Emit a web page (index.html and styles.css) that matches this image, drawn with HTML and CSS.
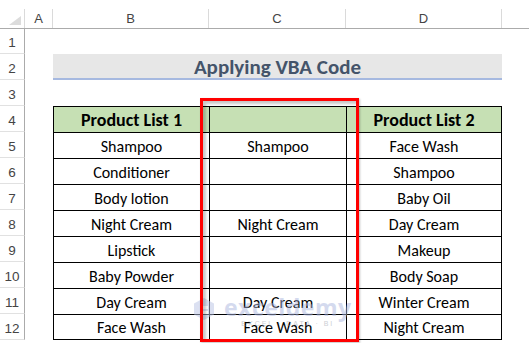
FILE: index.html
```html
<!DOCTYPE html>
<html>
<head>
<meta charset="utf-8">
<link rel="stylesheet" href="styles.css">
</head>
<body>
<div class="sheet">
  <div class="colhead">
    <div class="corner"><span class="tri"></span></div>
    <div class="ch ca">A</div>
    <div class="ch cb">B</div>
    <div class="ch cc">C</div>
    <div class="ch cd">D</div>
    <div class="ch ce"></div>
  </div>
  <div class="row r1"><div class="rn">1</div></div>
  <div class="row"><div class="rn">2</div><div class="ca"></div><div class="title">Applying VBA Code</div></div>
  <div class="row"><div class="rn">3</div></div>
  <div class="row"><div class="rn">4</div><div class="ca"></div><div class="cell cb hd">Product List 1</div><div class="cell cc hd"></div><div class="cell cd hd last">Product List 2</div></div>
  <div class="row"><div class="rn">5</div><div class="ca"></div><div class="cell cb">Shampoo</div><div class="cell cc">Shampoo</div><div class="cell cd last">Face Wash</div></div>
  <div class="row"><div class="rn">6</div><div class="ca"></div><div class="cell cb">Conditioner</div><div class="cell cc"></div><div class="cell cd last">Shampoo</div></div>
  <div class="row"><div class="rn">7</div><div class="ca"></div><div class="cell cb">Body lotion</div><div class="cell cc"></div><div class="cell cd last">Baby Oil</div></div>
  <div class="row"><div class="rn">8</div><div class="ca"></div><div class="cell cb">Night Cream</div><div class="cell cc">Night Cream</div><div class="cell cd last">Day Cream</div></div>
  <div class="row"><div class="rn">9</div><div class="ca"></div><div class="cell cb">Lipstick</div><div class="cell cc"></div><div class="cell cd last">Makeup</div></div>
  <div class="row"><div class="rn">10</div><div class="ca"></div><div class="cell cb">Baby Powder</div><div class="cell cc"></div><div class="cell cd last">Body Soap</div></div>
  <div class="row"><div class="rn">11</div><div class="ca"></div><div class="cell cb">Day Cream</div><div class="cell cc">Day Cream</div><div class="cell cd last">Winter Cream</div></div>
  <div class="row"><div class="rn">12</div><div class="ca"></div><div class="cell cb bottom">Face Wash</div><div class="cell cc bottom">Face Wash</div><div class="cell cd last bottom">Night Cream</div></div>
  <div class="watermark">
    <svg class="wm-icon" width="24" height="24" viewBox="0 0 24 24"><path d="M12 1 L22 6.5 V17.5 L12 23 L2 17.5 V6.5 Z" fill="#b9c3e4"/><path d="M8 9 H16 V12 H11 V14 H16 V17 H8 Z" fill="#ffffff"/></svg>
    <div class="wm-text">
      <div class="wm-name">exceldemy</div>
      <div class="wm-sub">EXCEL · DATA · BI</div>
    </div>
  </div>
  <div class="redbox"></div>
</div>
</body>
</html>
```
FILE: styles.css
```css
* { box-sizing: border-box; }
html, body { margin: 0; padding: 0; background: #ffffff; }
body {
  font-family: "Carlito", "Calibri", "Lato", "Liberation Sans", sans-serif;
  color: #000;
  width: 529px;
  height: 343px;
  overflow: hidden;
}
.sheet { position: relative; width: 529px; }
.colhead {
  display: flex;
  height: 29px;
  padding-top: 9px;
  border-bottom: 1px solid #ababab;
  font-family: "Liberation Sans", "DejaVu Sans", sans-serif;
  font-size: 13px;
  color: #444;
}
.corner { width: 25px; position: relative; border-right: 1px solid #dadada; }
.tri {
  position: absolute; right: 3px; bottom: 3px;
  width: 0; height: 0;
  border-left: 12px solid transparent;
  border-bottom: 9px solid #dcdcdc;
}
.ch {
  display: flex; align-items: center; justify-content: center;
  border-right: 1px solid #dadada;
}
.ca { width: 28px; }
.cb { width: 156px; }
.cc { width: 137px; }
.cd { width: 156px; }
.ce { flex: 1; border-right: none; }
.row { display: flex; height: 26px; position: relative; z-index: 1; }
.row.r1 { height: 25px; }
.rn {
  width: 25px;
  border-right: 1px solid #ababab;
  border-bottom: 1px solid #e1e1e1;
  display: flex; align-items: flex-end; justify-content: center;
  padding-bottom: 3px;
  font-family: "Liberation Sans", "DejaVu Sans", sans-serif;
  font-size: 13.5px;
  color: #444;
}
.title {
  width: 449px;
  background: #e7e7e7;
  border-bottom: 2px solid #a6b9e0;
  display: flex; align-items: center; justify-content: center;
  font-weight: bold;
  font-size: 21px;
  color: #44546a;
  padding-top: 1px;
}
.cell {
  border-left: 1px solid #000;
  border-top: 1px solid #000;
  display: flex; align-items: flex-end; justify-content: center;
  padding-bottom: 2px;
  font-size: 16px;
  white-space: nowrap;
}
.cell.last { border-right: 1px solid #000; }
.cell.bottom { border-bottom: 1px solid #000; }
.cell.hd { background: #c6e0b4; font-weight: bold; font-size: 18px; padding-bottom: 1px; }
.redbox {
  position: absolute;
  z-index: 3;
  left: 200px; top: 98px;
  width: 159px; height: 244px;
  border: 3px solid #ff0000;
  box-shadow: inset 3px 3px 3px rgba(0,0,0,0.22), 1px 1px 2px rgba(0,0,0,0.25);
}
.watermark {
  position: absolute;
  z-index: 2;
  left: 192px; top: 296px;
  display: flex; align-items: flex-start; gap: 8px;
  opacity: 0.5;
  pointer-events: none;
}
.wm-icon { margin-top: 1px; }
.wm-text { display: flex; flex-direction: column; align-items: center; }
.wm-name {
  font-family: "Open Sans", "DejaVu Sans", sans-serif;
  font-weight: bold;
  font-size: 23px;
  line-height: 22px;
  color: #aab6df;
  letter-spacing: 0.5px;
}
.wm-sub {
  font-family: "Liberation Sans", sans-serif;
  font-size: 7px;
  letter-spacing: 2px;
  color: #9aa0aa;
  margin-top: 2px;
}
```
